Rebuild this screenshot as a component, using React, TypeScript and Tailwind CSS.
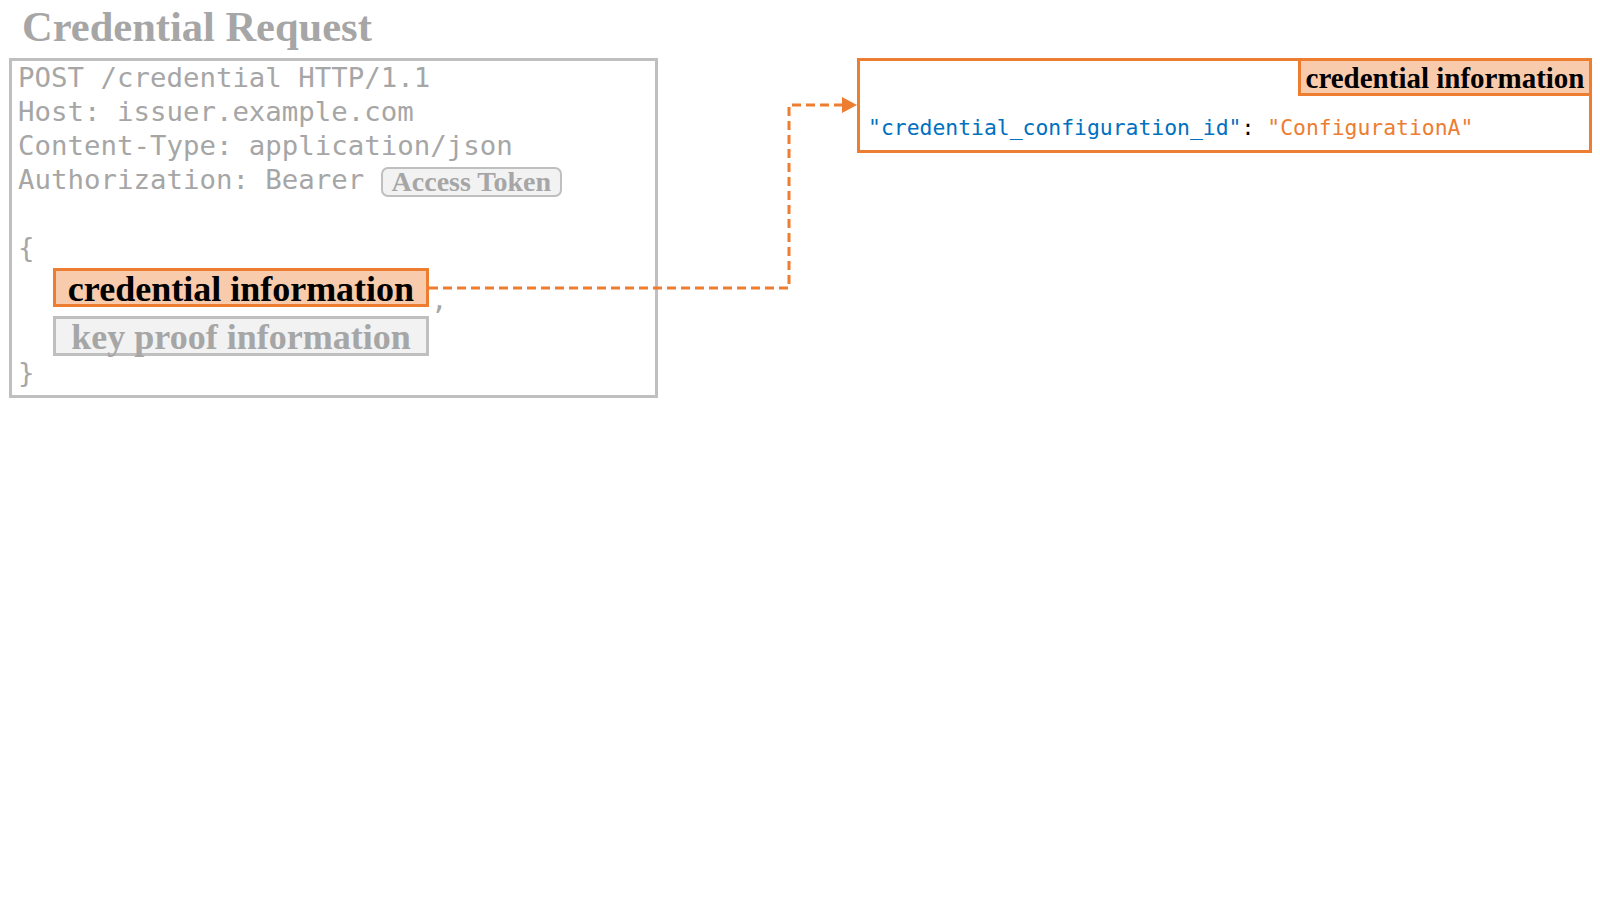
import React from "react";

const serif = { fontFamily: '"Liberation Serif", "DejaVu Serif", serif' };
const mono = { fontFamily: '"DejaVu Sans Mono", "Liberation Mono", monospace' };

const requestLines = [
  "POST /credential HTTP/1.1",
  "Host: issuer.example.com",
  "Content-Type: application/json",
];

const App = () => {
  return (
    <div className="relative w-[1600px] h-[900px] bg-white overflow-hidden">
      <h1
        className="h-[58px] pl-[22px] text-[42.5px] leading-[54px] font-bold text-[#a6a6a6]"
        style={serif}
      >
        Credential Request
      </h1>

      <div className="flex items-start gap-[199px] pl-[9px]">
        {/* request box */}
        <div className="w-[649px] h-[340px] border-[3px] border-[#bfbfbf] pl-[6px] text-[27.4px] leading-[34px] text-[#a6a6a6]" style={mono}>
          {requestLines.map(line => (
            <div key={line} className="whitespace-pre">{line}</div>
          ))}
          <div className="flex items-center whitespace-pre">
            <span>Authorization: Bearer </span>
            <span
              className="mt-[4px] flex h-[30px] w-[181px] items-center justify-center rounded-[7px] border-[2px] border-[#bfbfbf] bg-[#f2f2f2] text-[28px] leading-none font-bold text-[#a6a6a6]"
              style={serif}
            >
              Access Token
            </span>
          </div>
          <div className="h-[34px]"></div>
          <div>{"{"}</div>
          <div className="mt-[3px] ml-[35px] flex items-end">
            <div
              className="flex h-[39px] w-[376px] items-center justify-center border-[3px] border-[#ed7d31] bg-[#f8cbad] pt-[2px] text-[36px] leading-none font-bold text-black"
              style={serif}
            >
              credential information
            </div>
            <span className="ml-[2px] mb-[-8px] leading-[30px]">,</span>
          </div>
          <div
            className="mt-[9px] ml-[35px] flex h-[40px] w-[376px] items-center justify-center border-[3px] border-[#bfbfbf] bg-[#f2f2f2] pt-[2px] text-[36px] leading-none font-bold text-[#a6a6a6]"
            style={serif}
          >
            key proof information
          </div>
          <div>{"}"}</div>
        </div>

        {/* credential information box */}
        <div className="w-[735px] h-[95px] border-[3px] border-[#ed7d31]">
          <div className="flex justify-end">
            <div
              className="flex h-[35px] w-[291px] items-center justify-center border-l-[3px] border-b-[3px] border-[#ed7d31] bg-[#f8cbad] pt-[2px] text-[29px] leading-none font-bold text-black"
              style={serif}
            >
              credential information
            </div>
          </div>
          <div className="mt-[17px] pl-[8px] text-[21.4px] leading-[30px] whitespace-pre" style={mono}>
            <span className="text-[#0070c0]">"credential_configuration_id"</span>
            <span className="text-black">: </span>
            <span className="text-[#ed7d31]">"ConfigurationA"</span>
          </div>
        </div>
      </div>

      {/* connector arrow */}
      <svg className="pointer-events-none absolute inset-0" width="1600" height="900">
        <path
          d="M 429 288 H 789 V 105 H 843"
          fill="none"
          stroke="#ed7d31"
          strokeWidth="3"
          strokeDasharray="9 5"
        />
        <polygon points="842,97 857,105 842,113" fill="#ed7d31" />
      </svg>
    </div>
  );
};

export default App;
